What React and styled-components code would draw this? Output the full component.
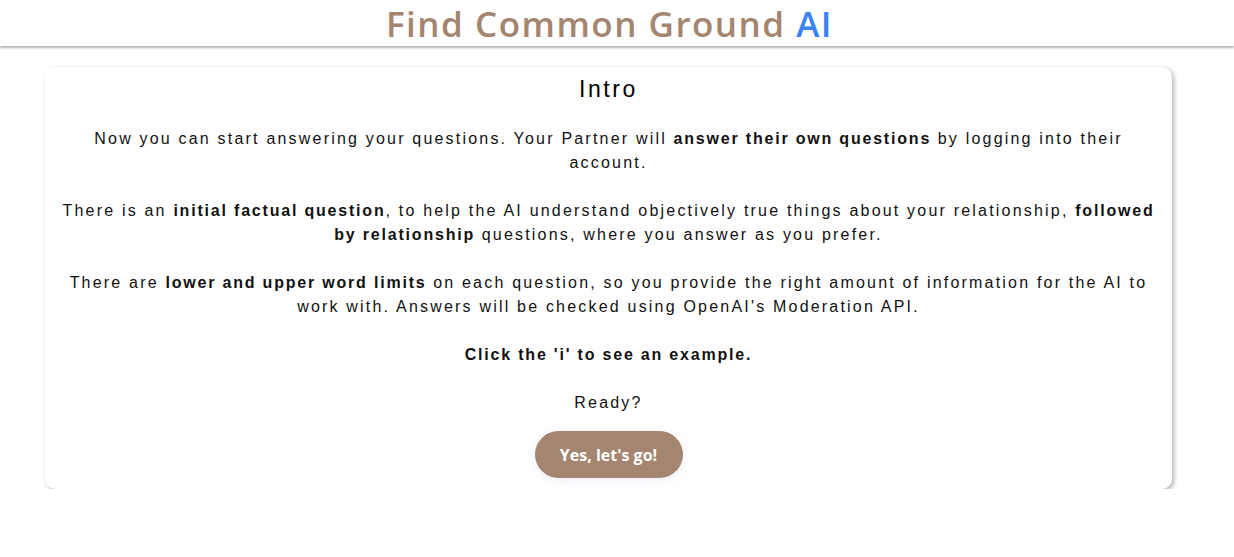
import React from 'react'
import styled, { createGlobalStyle } from 'styled-components';

const GlobalStyle = createGlobalStyle`
    body {
        margin: 0;
        background: #fff;
        font-family: "Liberation Sans", Arial, sans-serif;
    }
`;

function App() {
    return (
        <>
            <GlobalStyle />
            <Header>
                <h1>Find Common Ground <span>AI</span></h1>
            </Header>
            <Main>
                <Card>
                    <h2>Intro</h2>
                    <p>
                        Now you can start answering your questions. Your Partner will <b>answer their own questions</b> by logging into their account.
                    </p>
                    <p>
                        There is an <b>initial factual question</b>, to help the AI understand objectively true things about your relationship, <b>followed by relationship</b> questions, where you answer as you prefer.
                    </p>
                    <p>
                        There are <b>lower and upper word limits</b> on each question, so you provide the right amount of information for the AI to work with. Answers will be checked using OpenAI's Moderation API.
                    </p>
                    <p><b>Click the 'i' to see an example.</b></p>
                    <p>Ready?</p>
                    <GoButton>Yes, let's go!</GoButton>
                </Card>
            </Main>
        </>
    )
}

const Header = styled.header`
    height: 46px;
    display: flex;
    justify-content: center;
    align-items: center;
    padding-right: 15px;
    box-shadow: 0 2px 2px rgba(0, 0, 0, 0.3);
    h1 {
        margin: 0;
        font-family: "Open Sans", sans-serif;
        font-weight: 550;
        font-size: 35px;
        letter-spacing: 1.5px;
        color: #a38570;
        span {
            color: #3b82f6;
        }
    }
`;

const Main = styled.main`
    padding: 21px 62px 0 45px;
`;

const Card = styled.section`
    background: #fff;
    border-radius: 10px;
    box-shadow: 2px 2px 5px rgba(0, 0, 0, 0.3);
    padding: 8px 14px 11px;
    text-align: center;
    display: flex;
    flex-direction: column;
    align-items: center;
    h2 {
        margin: 0 0 24px;
        font-weight: 400;
        font-size: 23px;
        letter-spacing: 2.6px;
        line-height: 28px;
        color: #000;
    }
    p {
        margin: 0 0 24px;
        font-size: 16px;
        line-height: 24px;
        letter-spacing: 2.2px;
        color: #111;
        b {
            font-weight: 700;
            letter-spacing: 1.8px;
        }
    }
    p:last-of-type {
        margin-bottom: 16px;
    }
`;

const GoButton = styled.button`
    width: 148px;
    height: 47px;
    border: none;
    border-radius: 24px;
    background: #a38570;
    color: #fff;
    font-family: "Open Sans", sans-serif;
    font-weight: 700;
    font-size: 16px;
    letter-spacing: 0;
    box-shadow: 0 2px 10px rgba(90, 110, 200, 0.12);
    cursor: pointer;
`;

export default App;
